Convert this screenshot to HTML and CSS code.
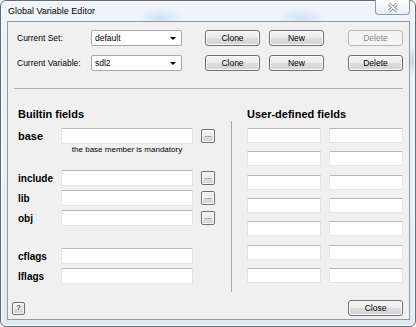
FILE: index.html
```html
<!DOCTYPE html>
<html lang="en">

<head>
    <meta charset="UTF-8">
    <title>Global Variable Editor</title>
    <link rel="stylesheet" href="styles.css">
</head>

<body>
    <div class="window">

        <div class="titlebar">
            <span class="title">Global Variable Editor</span>
            <div class="close-btn">
                <svg width="12" height="9" viewBox="0 0 12 9">
                    <path d="M2 1 L10 8 M10 1 L2 8" stroke="#7d8794" stroke-width="3" fill="none" />
                    <path d="M2 1 L10 8 M10 1 L2 8" stroke="#ffffff" stroke-width="1.2" fill="none" />
                </svg>
            </div>
        </div>

        <div class="client">

            <!-- set / variable pickers -->
            <div class="top">
                <div class="row">
                    <span class="lbl">Current Set:</span>
                    <div class="combo"><span>default</span><i class="arrow"></i></div>
                    <button class="btn clone">Clone</button>
                    <button class="btn new">New</button>
                    <button class="btn del" disabled>Delete</button>
                </div>
                <div class="row">
                    <span class="lbl">Current Variable:</span>
                    <div class="combo"><span>sdl2</span><i class="arrow"></i></div>
                    <button class="btn clone">Clone</button>
                    <button class="btn new">New</button>
                    <button class="btn del">Delete</button>
                </div>
            </div>

            <div class="hsep"></div>

            <div class="fields">

                <!-- Builtin fields -->
                <div class="builtin">
                    <h2>Builtin fields</h2>

                    <div class="frow base">
                        <label>base</label>
                        <input type="text">
                        <button class="dots">...</button>
                    </div>
                    <div class="note">the base member is mandatory</div>

                    <div class="frow include">
                        <label>include</label>
                        <input type="text">
                        <button class="dots">...</button>
                    </div>
                    <div class="frow">
                        <label>lib</label>
                        <input type="text">
                        <button class="dots">...</button>
                    </div>
                    <div class="frow">
                        <label>obj</label>
                        <input type="text">
                        <button class="dots">...</button>
                    </div>

                    <div class="frow cflags">
                        <label>cflags</label>
                        <input type="text">
                    </div>
                    <div class="frow">
                        <label>lflags</label>
                        <input type="text">
                    </div>
                </div>

                <div class="vsep"></div>

                <!-- User-defined fields -->
                <div class="userdef">
                    <h2>User-defined fields</h2>
                    <div class="ugrid">
                        <input type="text"><input type="text">
                        <input type="text"><input type="text">
                        <input type="text"><input type="text">
                        <input type="text"><input type="text">
                        <input type="text"><input type="text">
                        <input type="text"><input type="text">
                        <input type="text"><input type="text">
                    </div>
                </div>

            </div>

            <div class="bottom">
                <button class="btn help">?</button>
                <button class="btn close">Close</button>
            </div>

        </div>
    </div>
</body>

</html>
```

FILE: styles.css
```css
body {
    margin: 0;
    background-color: #ffffff;
    font-family: "Liberation Sans", Arial, sans-serif;
}

.window {
    box-sizing: border-box;
    width: 416px;
    height: 327px;
    display: flex;
    flex-direction: column;
    padding: 0 5px 6px 6px;
    border: 1px solid #5f6b78;
    border-radius: 6px;
    background:
        radial-gradient(ellipse 22px 12px at 160px 18px, rgba(140, 185, 235, 0.3), transparent),
        radial-gradient(ellipse 24px 12px at 300px 18px, rgba(140, 185, 235, 0.28), transparent),
        radial-gradient(ellipse 5px 16px at 412px 60px, rgba(110, 165, 225, 0.4), transparent),
        linear-gradient(#eef4fa, #e2eaf3);
    box-shadow: inset 0 0 0 1px rgba(255, 255, 255, 0.8);
}

.titlebar {
    height: 20px;
    display: flex;
    align-items: flex-start;
}

.title {
    padding: 5px 0 0 1px;
    font-size: 9px;
    line-height: 11px;
    color: #000;
    text-shadow: 0 0 4px #fff;
}

.close-btn {
    box-sizing: border-box;
    margin-left: auto;
    margin-top: -1px;
    width: 35px;
    height: 15px;
    display: flex;
    justify-content: center;
    align-items: center;
    border: 1px solid #8e99a7;
    border-top: none;
    border-radius: 0 0 4px 4px;
    background: linear-gradient(#ffffff, #e9eef4);
}

.client {
    box-sizing: border-box;
    width: 403px;
    height: 299px;
    display: flex;
    flex-direction: column;
    border: 1px solid #8e9aa8;
    background-color: #f0f0f0;
}

/* top pickers */

.top {
    padding: 8px 0 0 9px;
}

.row {
    display: flex;
    align-items: center;
    height: 16px;
}

.row + .row {
    margin-top: 9px;
}

.lbl {
    width: 74px;
    font-size: 8.5px;
}

.combo {
    box-sizing: border-box;
    width: 91px;
    height: 16px;
    display: flex;
    align-items: center;
    padding: 0 5px 0 3px;
    border: 1px solid #a5a8b0;
    border-radius: 2px;
    background-color: #ffffff;
    font-size: 8.5px;
}

.arrow {
    margin-left: auto;
    width: 0;
    height: 0;
    border-left: 3px solid transparent;
    border-right: 3px solid transparent;
    border-top: 3px solid #000;
}

.btn {
    box-sizing: border-box;
    width: 55px;
    height: 16px;
    padding: 0;
    font-family: "Liberation Sans", Arial, sans-serif;
    font-size: 8.5px;
    color: #000;
    border: 1px solid #707070;
    border-radius: 3px;
    background: linear-gradient(#f3f3f3 0%, #ececec 50%, #dedede 51%, #d2d2d2 100%);
    box-shadow: inset 0 0 0 1px #fbfbfb;
}

.clone {
    margin-left: 23px;
}

.new {
    margin-left: 9px;
}

.del {
    margin-left: 24px;
}

.btn:disabled {
    color: #8a8a8a;
    border-color: #b4b8bb;
    background: #f4f4f4;
    box-shadow: none;
}

.hsep {
    margin: 17px 6px 0 6px;
    border-top: 1px solid #b2b2b2;
}

/* field columns */

.fields {
    flex: 1;
    display: flex;
    padding-left: 10px;
}

h2 {
    margin: 19px 0 0;
    font-size: 11px;
    line-height: 13px;
    font-weight: bold;
}

.builtin {
    width: 197px;
}

input {
    box-sizing: border-box;
    margin: 0;
    height: 16px;
    border: 1px solid #e2e5ea;
    border-top-color: #b5b8be;
    border-radius: 1px;
    background-color: #ffffff;
}

.frow {
    display: flex;
    align-items: center;
    height: 16px;
    margin-top: 4px;
}

.frow label {
    width: 43px;
    font-size: 10px;
    font-weight: bold;
}

.frow input {
    width: 132px;
}

.base {
    margin-top: 7px;
}

.base label {
    font-size: 11px;
}

.include {
    margin-top: 15px;
}

.cflags {
    margin-top: 22px;
}

.dots {
    box-sizing: border-box;
    width: 14px;
    height: 14px;
    margin-left: 8px;
    padding: 0 0 3px;
    font-family: "Liberation Sans", Arial, sans-serif;
    font-size: 8px;
    line-height: 8px;
    color: #223;
    border: 1px solid #707070;
    border-radius: 2px;
    background: linear-gradient(#f3f3f3 0%, #ececec 50%, #dedede 51%, #d2d2d2 100%);
    box-shadow: inset 0 0 0 1px #fbfbfb;
    display: flex;
    align-items: flex-end;
    justify-content: center;
}

.note {
    margin: 1px 0 0 43px;
    width: 132px;
    text-align: center;
    font-size: 8px;
    line-height: 10px;
}

.vsep {
    width: 1px;
    height: 171px;
    margin: 32px 0 0 16px;
    background-color: #a9a9a9;
}

.userdef {
    margin-left: 15px;
}

.ugrid {
    margin-top: 7px;
    display: grid;
    grid-template-columns: 74px 74px;
    grid-auto-rows: 15px;
    column-gap: 8px;
    row-gap: 8.33px;
}

.ugrid input {
    width: 74px;
    height: 15px;
}

/* bottom buttons */

.bottom {
    display: flex;
    justify-content: space-between;
    align-items: center;
    padding: 0 6px 3px 4px;
}

.help {
    width: 13px;
    height: 13px;
    font-size: 8px;
    line-height: 8px;
    border-radius: 2px;
}
```
